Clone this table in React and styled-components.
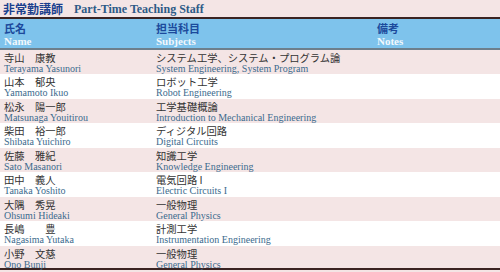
import React from "react";
import styled, { createGlobalStyle } from "styled-components";

const GlobalStyle = createGlobalStyle`
  html, body {
    margin: 0;
    padding: 0;
    background: #f4e5e5;
  }
`;

const Page = styled.div`
  width: 500px;
  height: 272px;
  overflow: hidden;
  background: #f4e5e5;
`;

const TitleBar = styled.div`
  height: 17px;
  display: flex;
  align-items: center;
  padding-left: 3px;
  gap: 11px;
  border-bottom: 2px solid #3b2322;
`;

const TitleJa = styled.span`
  font-family: "Noto Sans CJK JP", sans-serif;
  font-weight: 700;
  font-size: 12px;
  color: #1b3f8e;
  line-height: 14px;
`;

const TitleEn = styled.span`
  font-family: "Liberation Serif", serif;
  font-weight: 700;
  font-size: 12px;
  color: #2d5a87;
  line-height: 14px;
`;

const Table = styled.div`
  display: grid;
  grid-template-columns: 152px 221px 1fr;
`;

const HeadCell = styled.div`
  height: 31px;
  box-sizing: border-box;
  background: #7ec3ec;
  border-bottom: 2px solid #6d7f8c;
  padding: 3px 0 0 4px;
`;

const HeadJa = styled.div`
  font-family: "Noto Sans CJK JP", sans-serif;
  font-weight: 700;
  font-size: 11px;
  line-height: 13px;
  color: #1c4a9c;
`;

const HeadEn = styled.div`
  font-family: "Liberation Serif", serif;
  font-weight: 700;
  font-size: 11px;
  line-height: 13px;
  color: #f2f8fc;
`;

const Cell = styled.div`
  height: 24.44px;
  box-sizing: border-box;
  padding: 2px 0 0 4px;
  background: ${(p) => (p.$odd ? "#f4e5e5" : "#ffffff")};
  border-bottom: ${(p) => (p.$last ? "2px solid #3b2322" : "none")};
  white-space: nowrap;
`;

const Ja = styled.div`
  font-family: "Noto Sans CJK JP", sans-serif;
  font-size: 10.3px;
  line-height: 12px;
  color: #333333;
  white-space: pre;
`;

const En = styled.div`
  font-family: "Liberation Serif", serif;
  font-size: 10px;
  line-height: 10px;
  color: #3c6b8e;
`;

const staff = [
  ["寺山　康教", "Terayama Yasunori", "システム工学、システム・プログラム論", "System Engineering, System Program"],
  ["山本　郁央", "Yamamoto Ikuo", "ロボット工学", "Robot Engineering"],
  ["松永　陽一郎", "Matsunaga Youitirou", "工学基礎概論", "Introduction to Mechanical Engineering"],
  ["柴田　裕一郎", "Shibata Yuichiro", "ディジタル回路", "Digital Circuits"],
  ["佐藤　雅紀", "Sato Masanori", "知識工学", "Knowledge Engineering"],
  ["田中　義人", "Tanaka Yoshito", "電気回路 I", "Electric Circuits I"],
  ["大隅　秀晃", "Ohsumi Hideaki", "一般物理", "General Physics"],
  ["長嶋　　豊", "Nagasima Yutaka", "計測工学", "Instrumentation Engineering"],
  ["小野　文慈", "Ono Bunji", "一般物理", "General Physics"],
];

export default function App() {
  return (
    <Page>
      <GlobalStyle />
      <TitleBar>
        <TitleJa>非常勤講師</TitleJa>
        <TitleEn>Part-Time Teaching Staff</TitleEn>
      </TitleBar>
      <Table>
        <HeadCell>
          <HeadJa>氏名</HeadJa>
          <HeadEn>Name</HeadEn>
        </HeadCell>
        <HeadCell>
          <HeadJa>担当科目</HeadJa>
          <HeadEn>Subjects</HeadEn>
        </HeadCell>
        <HeadCell>
          <HeadJa>備考</HeadJa>
          <HeadEn>Notes</HeadEn>
        </HeadCell>
        {staff.map(([ja, en, subJa, subEn], i) => {
          const odd = i % 2 === 0;
          const last = i === staff.length - 1;
          return (
            <React.Fragment key={en}>
              <Cell $odd={odd} $last={last}>
                <Ja>{ja}</Ja>
                <En>{en}</En>
              </Cell>
              <Cell $odd={odd} $last={last}>
                <Ja>{subJa}</Ja>
                <En>{subEn}</En>
              </Cell>
              <Cell $odd={odd} $last={last} />
            </React.Fragment>
          );
        })}
      </Table>
    </Page>
  );
}
